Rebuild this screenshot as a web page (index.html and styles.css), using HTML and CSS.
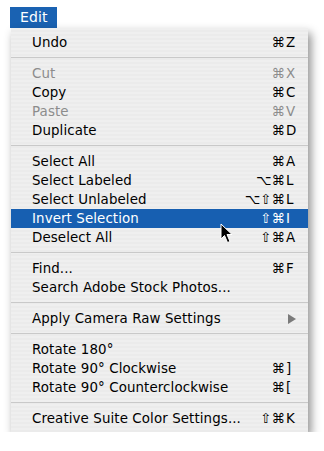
FILE: index.html
```html
<!DOCTYPE html>
<html lang="en">
<head>
  <meta charset="UTF-8">
  <title>Edit Menu</title>
  <link rel="stylesheet" href="styles.css">
</head>

<body>

<div class="menubar">
  <span class="menu-title">Edit</span>
</div>

<div class="menu">
  <div class="item"><span class="label">Undo</span><span class="mods">⌘</span><span class="key">Z</span></div>
  <div class="sep"></div>

  <div class="item disabled"><span class="label">Cut</span><span class="mods">⌘</span><span class="key">X</span></div>
  <div class="item"><span class="label">Copy</span><span class="mods">⌘</span><span class="key">C</span></div>
  <div class="item disabled"><span class="label">Paste</span><span class="mods">⌘</span><span class="key">V</span></div>
  <div class="item"><span class="label">Duplicate</span><span class="mods">⌘</span><span class="key">D</span></div>
  <div class="sep"></div>

  <div class="item"><span class="label">Select All</span><span class="mods">⌘</span><span class="key">A</span></div>
  <div class="item"><span class="label">Select Labeled</span><span class="mods">⌥⌘</span><span class="key">L</span></div>
  <div class="item"><span class="label">Select Unlabeled</span><span class="mods">⌥⇧⌘</span><span class="key">L</span></div>
  <div class="item selected"><span class="label">Invert Selection</span><span class="mods">⇧⌘</span><span class="key">I</span></div>
  <div class="item"><span class="label">Deselect All</span><span class="mods">⇧⌘</span><span class="key">A</span></div>
  <div class="sep"></div>

  <div class="item"><span class="label">Find...</span><span class="mods">⌘</span><span class="key">F</span></div>
  <div class="item"><span class="label">Search Adobe Stock Photos...</span></div>
  <div class="sep"></div>

  <div class="item"><span class="label">Apply Camera Raw Settings</span><span class="submenu"></span></div>
  <div class="sep"></div>

  <div class="item"><span class="label">Rotate 180°</span></div>
  <div class="item"><span class="label">Rotate 90° Clockwise</span><span class="mods">⌘</span><span class="key">]</span></div>
  <div class="item"><span class="label">Rotate 90° Counterclockwise</span><span class="mods">⌘</span><span class="key">[</span></div>
  <div class="sep"></div>

  <div class="item"><span class="label">Creative Suite Color Settings...</span><span class="mods">⇧⌘</span><span class="key">K</span></div>

  <!-- mouse pointer over the highlighted row -->
  <svg class="cursor" width="14" height="21" viewBox="0 0 14 21">
    <path d="M1 1 L1 16 L4.5 12.5 L7.5 19.5 L10 18.5 L7 11.5 L12 11.5 Z" fill="#000" stroke="#fff" stroke-width="1"/>
  </svg>
</div>

</body>
</html>
```

FILE: styles.css
```css
body {
  margin: 0;
  padding: 7px 0 0 10px;
  background-color: #ffffff;
  font-family: 'DejaVu Sans', 'Lucida Grande', sans-serif;
  font-size: 13.4px;
  letter-spacing: 0.1px;
  color: #000;
}

.menubar {
  height: 21px;
}

.menu-title {
  display: inline-block;
  height: 21px;
  line-height: 21px;
  padding: 0 9px 0 10px;
  font-size: 14px;
  background-color: #1a62b2;
  color: #ffffff;
}

.menu {
  position: relative;
  width: 297px;
  margin-left: 1px;
  padding: 5px 0 4px 0;
  box-sizing: border-box;
  background: repeating-linear-gradient(#efefef 0, #efefef 2px, #ebebeb 2px, #ebebeb 4px);
  box-shadow: 3px 5px 9px rgba(0, 0, 0, 0.45);
}

.item {
  display: flex;
  align-items: center;
  height: 19px;
  padding: 0 10px 0 21px;
}

.item .label {
  flex: 1;
  white-space: nowrap;
}

.item .mods {
  text-align: right;
}

.item .key {
  width: 12px;
  padding-left: 1px;
}

.item.disabled {
  color: #8c8c8c;
}

.item.selected {
  background-color: #175fb1;
  color: #ffffff;
}

.submenu {
  width: 0;
  height: 0;
  margin-right: 2px;
  border-top: 5px solid transparent;
  border-bottom: 5px solid transparent;
  border-left: 8px solid #7a7a7a;
}

.sep {
  height: 1px;
  margin: 5px 0 6px 0;
  background-color: #c9c9c9;
}

.cursor {
  position: absolute;
  left: 209px;
  top: 195px;
}
```
